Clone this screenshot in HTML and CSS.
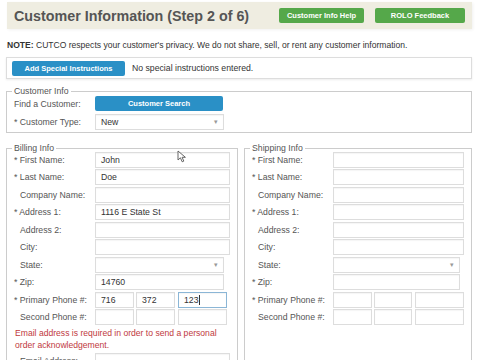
FILE: index.html
```html
<!DOCTYPE html>
<html lang="en">
  <head>
    <meta charset="UTF-8" />
    <meta name="viewport" content="width=device-width, initial-scale=1.0" />
    <title>Customer Information (Step 2 of 6)</title>
    <link rel="stylesheet" href="styles.css">
  </head>
  <body>
    <!-- Page header with title and help buttons -->
    <div class="header">
      <h1>Customer Information (Step 2 of 6)</h1>
      <div class="header-buttons">
        <button class="btn-green help">Customer Info Help</button>
        <button class="btn-green rolo">ROLO Feedback</button>
      </div>
    </div>

    <p class="note"><b>NOTE:</b> CUTCO respects your customer's privacy. We do not share, sell, or rent any customer information.</p>

    <!-- Special instructions bar -->
    <div class="special">
      <button class="btn-blue special-btn">Add Special Instructions</button>
      <span>No special instructions entered.</span>
    </div>

    <!-- Customer info -->
    <fieldset class="customer">
      <legend>Customer Info</legend>
      <div class="grid">
        <label>Find a Customer:</label>
        <button class="btn-blue search-btn">Customer Search</button>
        <label>* Customer Type:</label>
        <div class="select short">New</div>
      </div>
    </fieldset>

    <div class="columns">
      <!-- Billing info -->
      <fieldset class="billing">
        <legend>Billing Info</legend>
        <div class="grid">
          <label>* First Name:</label>
          <div class="input">John</div>
          <label>* Last Name:</label>
          <div class="input">Doe</div>
          <label class="opt">Company Name:</label>
          <div class="input"></div>
          <label>* Address 1:</label>
          <div class="input">1116 E State St</div>
          <label class="opt">Address 2:</label>
          <div class="input"></div>
          <label class="opt">City:</label>
          <div class="input"></div>
          <label class="opt">State:</label>
          <div class="select short"></div>
          <label>* Zip:</label>
          <div class="input short">14760</div>
          <label>* Primary Phone #:</label>
          <div class="phone">
            <div class="input p1">716</div>
            <div class="input p2">372</div>
            <div class="input p3 focus">123<span class="caret"></span></div>
          </div>
          <label class="opt">Second Phone #:</label>
          <div class="phone">
            <div class="input p1"></div>
            <div class="input p2"></div>
            <div class="input p3"></div>
          </div>
        </div>
        <p class="error">Email address is required in order to send a personal order acknowledgement.</p>
        <div class="grid">
          <label class="opt">Email Address:</label>
          <div class="input"></div>
        </div>
      </fieldset>

      <!-- Shipping info -->
      <fieldset class="shipping">
        <legend>Shipping Info</legend>
        <div class="grid">
          <label>* First Name:</label>
          <div class="input"></div>
          <label>* Last Name:</label>
          <div class="input"></div>
          <label class="opt">Company Name:</label>
          <div class="input"></div>
          <label>* Address 1:</label>
          <div class="input"></div>
          <label class="opt">Address 2:</label>
          <div class="input"></div>
          <label class="opt">City:</label>
          <div class="input"></div>
          <label class="opt">State:</label>
          <div class="select short"></div>
          <label>* Zip:</label>
          <div class="input short"></div>
          <label>* Primary Phone #:</label>
          <div class="phone">
            <div class="input p1"></div>
            <div class="input p2"></div>
            <div class="input p3"></div>
          </div>
          <label class="opt">Second Phone #:</label>
          <div class="phone">
            <div class="input p1"></div>
            <div class="input p2"></div>
            <div class="input p3"></div>
          </div>
        </div>
      </fieldset>
    </div>

    <!-- mouse pointer -->
    <svg class="pointer" width="10" height="13" viewBox="0 0 10 13">
      <path d="M1 1 L1 10 L3.4 7.8 L5.2 11.8 L6.8 11.1 L5.1 7.3 L8.4 7.3 Z" fill="#fff" stroke="#555" stroke-width="0.9" stroke-linejoin="round" />
    </svg>
  </body>
</html>
```

FILE: styles.css
```css
body {
  margin: 0;
  font-family: "Liberation Sans", Arial, sans-serif;
  font-size: 8.7px;
  color: #555;
  background: #fff;
  width: 480px;
  height: 360px;
  overflow: hidden;
  position: relative;
}
.header {
  margin: 2px 8px 0 7px;
  height: 27px;
  background: #efede1;
  display: flex;
  align-items: center;
  justify-content: space-between;
  padding: 0 7px 0 7px;
  box-shadow: 1px 1px 3px rgba(0, 0, 0, 0.06);
}
h1 {
  margin: 0;
  font-size: 14.3px;
  font-weight: bold;
  color: #555;
}
.header-buttons {
  display: flex;
  gap: 11px;
}
button {
  font-family: "Liberation Sans", Arial, sans-serif;
  border: none;
  color: #fff;
  font-weight: bold;
  font-size: 7.5px;
  padding: 0;
  border-radius: 2px;
  height: 15px;
}
.btn-green {
  background: #55a84a;
}
.help {
  width: 85px;
}
.rolo {
  width: 90px;
}
.btn-blue {
  background: #2a90c6;
}
.note {
  margin: 11px 0 0 7px;
  font-size: 8.55px;
  color: #333;
}
.special {
  margin: 7px 8px 0 6px;
  height: 20px;
  border: 1px solid #ddd;
  box-shadow: 0 1px 2px rgba(0, 0, 0, 0.08);
  display: flex;
  align-items: center;
  padding: 0 5px;
  gap: 7px;
  color: #333;
}
.special-btn {
  width: 113px;
}
fieldset {
  margin: 0;
  border: 1px solid #ccc;
  padding: 0 7px 4px 7px;
}
legend {
  padding: 0 2px;
  margin-left: -2px;
  color: #555;
  font-size: 8.7px;
}
.customer {
  margin: 7px 8px 0 6px;
  padding-bottom: 2px;
}
.grid {
  display: grid;
  grid-template-columns: 81px 1fr;
  row-gap: 1.45px;
  align-items: center;
}
.customer .grid {
  row-gap: 3px;
  margin-top: 0;
}
.billing > .grid:first-of-type,
.shipping > .grid {
  margin-top: -1px;
}
.search-btn {
  width: 128px;
}
label {
  white-space: nowrap;
}
label.opt {
  padding-left: 6px;
}
.input,
.select {
  height: 14px;
  border: 1px solid #ddd;
  box-shadow: inset 0 1px 1px rgba(0, 0, 0, 0.04);
  padding-left: 5px;
  line-height: 14px;
  color: #333;
  position: relative;
}
.select {
  width: 122px;
}
.select::after {
  content: "▾";
  position: absolute;
  right: 5px;
  top: 0;
  font-size: 7px;
  color: #999;
}
.input.short {
  width: 122px;
}
.billing .select,
.billing .input.short {
  width: 122px;
}
.shipping .select,
.shipping .input.short {
  width: 120px;
}
.columns {
  display: flex;
  gap: 6px;
  margin: 10px 8px 0 6px;
}
.billing {
  width: 216px;
}
.shipping {
  flex: 1;
}
.phone {
  display: flex;
  gap: 2px;
}
.billing .p1 { width: 32px; }
.billing .p2 { width: 32px; }
.billing .p3 { width: 42px; margin-left: 1px; }
.shipping .p1 { width: 32px; }
.shipping .p2 { width: 31px; }
.shipping .p3 { width: 42px; margin-left: 1px; }
.focus {
  border-color: #8bb6d6;
}
.caret {
  display: inline-block;
  width: 1px;
  height: 10px;
  background: #333;
  vertical-align: middle;
}
.error {
  margin: 2px 0 2px 1px;
  color: #c0393e;
  font-size: 8.6px;
  line-height: 12px;
}
.pointer {
  position: absolute;
  left: 177px;
  top: 150px;
}
```
